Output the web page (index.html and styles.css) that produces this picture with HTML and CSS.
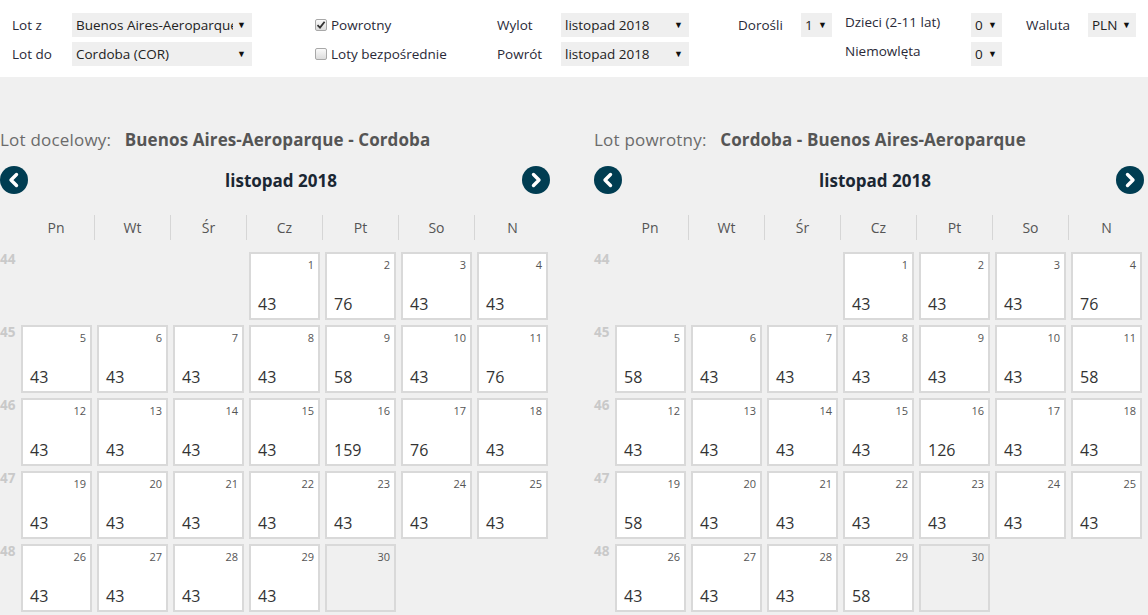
FILE: index.html
```html
<!DOCTYPE html>
<html lang="pl">
  <head>
    <meta charset="UTF-8" />
    <meta name="viewport" content="width=device-width, initial-scale=1.0" />
    <title>Kalendarz lotów</title>
    <link rel="stylesheet" href="styles.css">
  </head>

  <body>
    <div class="filters">
      <div class="group group-route">
        <span class="lbl">Lot z</span>
        <div class="select wide"><span class="val">Buenos Aires-Aeroparque</span><span class="caret">&#9660;</span></div>
        <span class="lbl">Lot do</span>
        <div class="select wide"><span class="val">Cordoba (COR)</span><span class="caret">&#9660;</span></div>
      </div>

      <div class="group group-checks">
        <label class="check">
          <span class="box checked">
            <svg width="10" height="10" viewBox="0 0 10 10"><polyline points="1.5,5.2 4,7.6 8.6,1.8" fill="none" stroke="#333" stroke-width="1.8"/></svg>
          </span>
          Powrotny
        </label>
        <label class="check">
          <span class="box"></span>
          Loty bezpośrednie
        </label>
      </div>

      <div class="group group-dates">
        <span class="lbl">Wylot</span>
        <div class="select"><span class="val">listopad 2018</span><span class="caret">&#9660;</span></div>
        <span class="lbl">Powrót</span>
        <div class="select"><span class="val">listopad 2018</span><span class="caret">&#9660;</span></div>
      </div>

      <div class="group group-adults">
        <span class="lbl">Dorośli</span>
        <div class="select small"><span class="val">1</span><span class="caret">&#9660;</span></div>
      </div>

      <div class="group group-kids">
        <span class="lbl lbl-up">Dzieci (2-11 lat)</span>
        <div class="select small"><span class="val">0</span><span class="caret">&#9660;</span></div>
        <span class="lbl lbl-up">Niemowlęta</span>
        <div class="select small"><span class="val">0</span><span class="caret">&#9660;</span></div>
      </div>

      <div class="group group-currency">
        <span class="lbl">Waluta</span>
        <div class="select small"><span class="val">PLN</span><span class="caret">&#9660;</span></div>
      </div>
    </div>

    <div class="calendars">
      <!-- wylot -->
      <div class="calendar">
        <h3 class="cal-title">Lot docelowy: <b>Buenos Aires-Aeroparque - Cordoba</b></h3>
        <div class="cal-nav">
          <span class="arrow"><svg width="28" height="28" viewBox="0 0 28 28"><polyline points="16.5,8.5 11,14 16.5,19.5" fill="none" stroke="#fff" stroke-width="3.4" stroke-linecap="round" stroke-linejoin="round"/></svg></span>
          <span class="month">listopad 2018</span>
          <span class="arrow"><svg width="28" height="28" viewBox="0 0 28 28"><polyline points="11.5,8.5 17,14 11.5,19.5" fill="none" stroke="#fff" stroke-width="3.4" stroke-linecap="round" stroke-linejoin="round"/></svg></span>
        </div>
        <div class="weekdays">
          <span></span><span>Pn</span><span>Wt</span><span>Śr</span><span>Cz</span><span>Pt</span><span>So</span><span>N</span>
        </div>
        <div class="weeks">
          <span class="wk">44</span><span></span><span></span><span></span>
          <div class="day"><i>1</i><b>43</b></div>
          <div class="day"><i>2</i><b>76</b></div>
          <div class="day"><i>3</i><b>43</b></div>
          <div class="day"><i>4</i><b>43</b></div>

          <span class="wk">45</span>
          <div class="day"><i>5</i><b>43</b></div>
          <div class="day"><i>6</i><b>43</b></div>
          <div class="day"><i>7</i><b>43</b></div>
          <div class="day"><i>8</i><b>43</b></div>
          <div class="day"><i>9</i><b>58</b></div>
          <div class="day"><i>10</i><b>43</b></div>
          <div class="day"><i>11</i><b>76</b></div>

          <span class="wk">46</span>
          <div class="day"><i>12</i><b>43</b></div>
          <div class="day"><i>13</i><b>43</b></div>
          <div class="day"><i>14</i><b>43</b></div>
          <div class="day"><i>15</i><b>43</b></div>
          <div class="day"><i>16</i><b>159</b></div>
          <div class="day"><i>17</i><b>76</b></div>
          <div class="day"><i>18</i><b>43</b></div>

          <span class="wk">47</span>
          <div class="day"><i>19</i><b>43</b></div>
          <div class="day"><i>20</i><b>43</b></div>
          <div class="day"><i>21</i><b>43</b></div>
          <div class="day"><i>22</i><b>43</b></div>
          <div class="day"><i>23</i><b>43</b></div>
          <div class="day"><i>24</i><b>43</b></div>
          <div class="day"><i>25</i><b>43</b></div>

          <span class="wk">48</span>
          <div class="day"><i>26</i><b>43</b></div>
          <div class="day"><i>27</i><b>43</b></div>
          <div class="day"><i>28</i><b>43</b></div>
          <div class="day"><i>29</i><b>43</b></div>
          <div class="day empty"><i>30</i></div>
        </div>
      </div>

      <!-- powrot -->
      <div class="calendar">
        <h3 class="cal-title">Lot powrotny: <b>Cordoba - Buenos Aires-Aeroparque</b></h3>
        <div class="cal-nav">
          <span class="arrow"><svg width="28" height="28" viewBox="0 0 28 28"><polyline points="16.5,8.5 11,14 16.5,19.5" fill="none" stroke="#fff" stroke-width="3.4" stroke-linecap="round" stroke-linejoin="round"/></svg></span>
          <span class="month">listopad 2018</span>
          <span class="arrow"><svg width="28" height="28" viewBox="0 0 28 28"><polyline points="11.5,8.5 17,14 11.5,19.5" fill="none" stroke="#fff" stroke-width="3.4" stroke-linecap="round" stroke-linejoin="round"/></svg></span>
        </div>
        <div class="weekdays">
          <span></span><span>Pn</span><span>Wt</span><span>Śr</span><span>Cz</span><span>Pt</span><span>So</span><span>N</span>
        </div>
        <div class="weeks">
          <span class="wk">44</span><span></span><span></span><span></span>
          <div class="day"><i>1</i><b>43</b></div>
          <div class="day"><i>2</i><b>43</b></div>
          <div class="day"><i>3</i><b>43</b></div>
          <div class="day"><i>4</i><b>76</b></div>

          <span class="wk">45</span>
          <div class="day"><i>5</i><b>58</b></div>
          <div class="day"><i>6</i><b>43</b></div>
          <div class="day"><i>7</i><b>43</b></div>
          <div class="day"><i>8</i><b>43</b></div>
          <div class="day"><i>9</i><b>43</b></div>
          <div class="day"><i>10</i><b>43</b></div>
          <div class="day"><i>11</i><b>58</b></div>

          <span class="wk">46</span>
          <div class="day"><i>12</i><b>43</b></div>
          <div class="day"><i>13</i><b>43</b></div>
          <div class="day"><i>14</i><b>43</b></div>
          <div class="day"><i>15</i><b>43</b></div>
          <div class="day"><i>16</i><b>126</b></div>
          <div class="day"><i>17</i><b>43</b></div>
          <div class="day"><i>18</i><b>43</b></div>

          <span class="wk">47</span>
          <div class="day"><i>19</i><b>58</b></div>
          <div class="day"><i>20</i><b>43</b></div>
          <div class="day"><i>21</i><b>43</b></div>
          <div class="day"><i>22</i><b>43</b></div>
          <div class="day"><i>23</i><b>43</b></div>
          <div class="day"><i>24</i><b>43</b></div>
          <div class="day"><i>25</i><b>43</b></div>

          <span class="wk">48</span>
          <div class="day"><i>26</i><b>43</b></div>
          <div class="day"><i>27</i><b>43</b></div>
          <div class="day"><i>28</i><b>43</b></div>
          <div class="day"><i>29</i><b>58</b></div>
          <div class="day empty"><i>30</i></div>
        </div>
      </div>
    </div>
  </body>
</html>
```

FILE: styles.css
```css
body {
  margin: 0;
  background-color: #f0f0f0;
  font-family: "Open Sans", "Noto Sans", sans-serif;
  color: #2a2a38;
}

/* pasek z filtrami */
.filters {
  display: flex;
  align-items: flex-start;
  height: 77px;
  box-sizing: border-box;
  padding: 13px 0 0 12px;
  background-color: #fff;
  font-size: 13.5px;
}

.group {
  display: grid;
  grid-auto-rows: 24px;
  row-gap: 5px;
  align-items: center;
}

.group-route { grid-template-columns: 60px 180px; width: 240px; margin-right: 63px; }
.group-checks { width: 182px; display: flex; flex-direction: column; align-items: flex-start; gap: 5px; }
.group-dates { grid-template-columns: 64px 128px; width: 192px; margin-right: 49px; }
.group-adults { grid-template-columns: 63px 31px; width: 94px; margin-right: 13px; }
.group-kids { grid-template-columns: 126px 31px; width: 157px; margin-right: 24px; }
.group-currency { grid-template-columns: 62px 48px; }

.lbl-up { position: relative; top: -3px; }

.select {
  display: flex;
  align-items: center;
  height: 24px;
  padding: 0 6px 0 4px;
  background-color: #efefef;
  color: #222;
  overflow: hidden;
}

.select .val {
  flex: 1;
  min-width: 0;
  white-space: nowrap;
  overflow: hidden;
}

.select.small { padding: 0 5px 0 4px; }

.caret {
  font-size: 9px;
  color: #111;
  margin-left: 4px;
  position: relative;
  top: -1px;
}

.check {
  display: flex;
  align-items: center;
  height: 24px;
  gap: 4px;
}

.box {
  display: inline-flex;
  align-items: center;
  justify-content: center;
  width: 12px;
  height: 12px;
  border: 1px solid #a8a8a8;
  border-radius: 2px;
  background: linear-gradient(#fafafa, #dcdcdc);
  box-sizing: border-box;
}

/* kalendarze */
.calendars {
  display: flex;
  gap: 44px;
  padding-top: 53px;
}

.calendar {
  width: 550px;
}

.cal-title {
  margin: 0;
  font-size: 17px;
  font-weight: normal;
  line-height: 20px;
  letter-spacing: 0.2px;
  color: #6b6b6b;
  white-space: nowrap;
}

.cal-title b {
  color: #555;
  margin-left: 9px;
  letter-spacing: 0.1px;
}

.cal-nav {
  display: flex;
  justify-content: space-between;
  align-items: center;
  margin-top: 16px;
  height: 28px;
}

.arrow {
  width: 28px;
  height: 28px;
  border-radius: 50%;
  background-color: #003d52;
}

.arrow svg { display: block; }

.month {
  font-size: 17px;
  font-weight: bold;
  color: #1b2733;
  margin-left: 12px;
}

.weekdays {
  display: grid;
  grid-template-columns: 18px repeat(7, 76px);
  margin-top: 21px;
  height: 25px;
}

.weekdays span {
  display: flex;
  align-items: center;
  justify-content: center;
  font-size: 14px;
  color: #555;
}

.weekdays span + span + span {
  border-left: 1px solid #d6d6d6;
}

.weeks {
  display: grid;
  grid-template-columns: 18px repeat(7, 76px);
  grid-auto-rows: 73px;
  margin-top: 11px;
}

.wk {
  font-size: 13.5px;
  font-weight: bold;
  color: #c9c9c9;
  line-height: 16px;
}

.day {
  width: 71px;
  height: 68px;
  margin: 1px 0 0 3px;
  box-sizing: border-box;
  border: 2px solid #d9d9d9;
  background-color: #fff;
  display: flex;
  flex-direction: column;
  justify-content: space-between;
  padding: 3px 4px 3px 7px;
}

.day i {
  font-style: normal;
  font-size: 11px;
  color: #555;
  text-align: right;
}

.day b {
  font-weight: normal;
  font-size: 16px;
  color: #333;
}

.day.empty {
  background-color: #f0f0f0;
  justify-content: flex-start;
}
```
